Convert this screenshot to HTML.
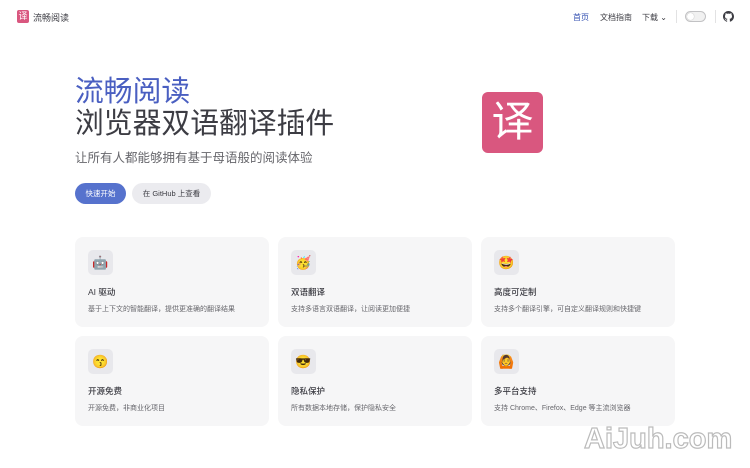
<!DOCTYPE html>
<html><head><meta charset="utf-8"><style>
*{margin:0;padding:0;box-sizing:border-box}
body{width:750px;height:468px;background:#fff;font-family:"Liberation Sans","Noto Sans CJK SC",sans-serif;color:#3c3c43;position:relative;overflow:hidden}
.a{position:absolute}
.nav{font-size:8px;color:#3c3c43}
.card{position:absolute;width:194px;height:90px;background:#f6f6f7;border-radius:8px}
.ic{position:absolute;left:13px;top:13px;width:25px;height:25px;background:#e8e8ec;border-radius:5px;font-size:13px;text-align:center;line-height:25px}
.t{position:absolute;left:13px;top:49px;font-size:8.5px;color:#3c3c43;font-weight:500}
.d{position:absolute;left:13px;top:67px;font-size:7px;color:#67676c}
</style></head><body>
<div class="a" style="left:17px;top:10px;width:12px;height:13px;background:#d9577f;border-radius:2px;color:#fff;font-size:9px;text-align:center;line-height:13px">译</div>
<div class="a nav" style="left:33px;top:11px;font-size:9px">流畅阅读</div>
<div class="a nav" style="left:573px;top:12px;color:#3451b2">首页</div>
<div class="a nav" style="left:600px;top:12px">文档指南</div>
<div class="a nav" style="left:642px;top:12px">下载 ⌄</div>
<div class="a" style="left:676px;top:10px;width:1px;height:13px;background:#e2e2e3"></div>
<div class="a" style="left:685px;top:11px;width:21px;height:11px;border:1px solid #c2c2c4;border-radius:6px;background:#f1f1f1"><div style="position:absolute;left:1px;top:1px;width:7px;height:7px;border-radius:50%;background:#fff;box-shadow:0 0 1px #999"></div></div>
<div class="a" style="left:715px;top:10px;width:1px;height:13px;background:#e2e2e3"></div>
<svg class="a" style="left:723px;top:11px" width="11" height="11" viewBox="0 0 16 16"><path fill="#3c3c43" d="M8 0C3.6 0 0 3.6 0 8c0 3.5 2.3 6.5 5.5 7.6.4.1.5-.2.5-.4v-1.4c-2.2.5-2.7-1-2.7-1-.4-.9-.9-1.2-.9-1.2-.7-.5.1-.5.1-.5.8.1 1.2.8 1.2.8.7 1.2 1.9.9 2.3.7.1-.5.3-.9.5-1.1-1.8-.2-3.6-.9-3.6-4 0-.9.3-1.6.8-2.1-.1-.2-.4-1 .1-2.1 0 0 .7-.2 2.2.8.6-.2 1.3-.3 2-.3s1.4.1 2 .3c1.5-1 2.2-.8 2.2-.8.4 1.1.2 1.9.1 2.1.5.6.8 1.3.8 2.1 0 3.1-1.9 3.700-3.6 3.9.3.3.5.8.5 1.5v2.2c0 .2.1.5.6.4C13.7 14.5 16 11.5 16 8c0-4.4-3.6-8-8-8z"/></svg>
<div class="a" style="left:75px;top:75px;font-size:28.8px;color:#4a5fc1;line-height:34px">流畅阅读</div>
<div class="a" style="left:75px;top:107px;font-size:28.8px;color:#3c3c43;line-height:34px">浏览器双语翻译插件</div>
<div class="a" style="left:75px;top:150px;font-size:12.5px;color:#67676c;line-height:16px">让所有人都能够拥有基于母语般的阅读体验</div>
<div class="a" style="left:75px;top:183px;width:51px;height:21px;border-radius:11px;background:#5672cd;color:#fff;font-size:7.5px;text-align:center;line-height:21px">快速开始</div>
<div class="a" style="left:132px;top:183px;width:79px;height:21px;border-radius:11px;background:#ebebef;color:#3c3c43;font-size:7.5px;text-align:center;line-height:21px">在 GitHub 上查看</div>
<div class="a" style="left:482px;top:92px;width:61px;height:61px;border-radius:6px;background:#d9577f;color:#fff;font-size:42px;text-align:center;line-height:60px">译</div>
<div class="card" style="left:75px;top:237px"><div class="ic">🤖</div><div class="t">AI 驱动</div><div class="d">基于上下文的智能翻译，提供更准确的翻译结果</div></div>
<div class="card" style="left:278px;top:237px"><div class="ic">🥳</div><div class="t">双语翻译</div><div class="d">支持多语言双语翻译，让阅读更加便捷</div></div>
<div class="card" style="left:481px;top:237px"><div class="ic">🤩</div><div class="t">高度可定制</div><div class="d">支持多个翻译引擎，可自定义翻译规则和快捷键</div></div>
<div class="card" style="left:75px;top:336px"><div class="ic">😙</div><div class="t">开源免费</div><div class="d">开源免费，非商业化项目</div></div>
<div class="card" style="left:278px;top:336px"><div class="ic">😎</div><div class="t">隐私保护</div><div class="d">所有数据本地存储，保护隐私安全</div></div>
<div class="card" style="left:481px;top:336px"><div class="ic">🙆</div><div class="t">多平台支持</div><div class="d">支持 Chrome、Firefox、Edge 等主流浏览器</div></div>
<div class="a" style="left:584px;top:423px;font-size:29px;font-weight:bold;color:#fff;-webkit-text-stroke:1.2px #bbb">AiJuh.com</div>
</body></html>
